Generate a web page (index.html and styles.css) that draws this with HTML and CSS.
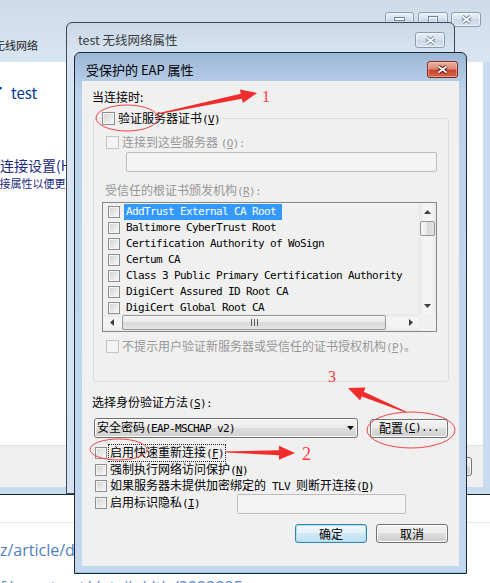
FILE: index.html
```html
<!DOCTYPE html>
<html lang="zh-CN">
<head>
<meta charset="utf-8">
<title>受保护的 EAP 属性</title>
<link rel="stylesheet" href="styles.css">
</head>
<body>

<div class="page">
  <div class="page-rule"></div>
  <div class="page-link">z/article/details/b9f5e3ad</div>
  <div class="page-link second">f.bewnt.net/details/dtls/2222225</div>
</div>

<!-- back window: wizard -->
<div class="win win-wizard">
  <div class="glass">
    <div class="glass-title">手动连接到无线网络</div>
    <div class="caption-btns">
      <span class="cap-btn cap-min"><svg width="11" height="5" viewBox="0 0 11 5"><rect x="0.5" y="0.5" width="10" height="3" fill="#fff" stroke="#6f8198"/></svg></span>
      <span class="cap-btn cap-max"><svg width="10" height="8" viewBox="0 0 10 8"><rect x="1" y="1" width="8" height="6" fill="none" stroke="#6f8198" stroke-width="2"/><rect x="1.5" y="1.5" width="7" height="5" fill="none" stroke="#fff" stroke-width="1"/></svg></span>
      <span class="cap-btn cap-close"><svg width="15" height="11" viewBox="0 0 15 11"><path d="M3.5 2.5 L11.5 8.5 M11.5 2.5 L3.5 8.5" stroke="#6f8198" stroke-width="3.6"/><path d="M3.5 2.5 L11.5 8.5 M11.5 2.5 L3.5 8.5" stroke="#fff" stroke-width="1.8"/></svg></span>
    </div>
  </div>
  <div class="wiz-client">
    <div class="wiz-body">
      <div class="wiz-main">成功地添加了 test</div>
      <div class="wiz-link">更改连接设置(H)</div>
      <div class="wiz-desc">打开连接属性以便更改设置。</div>
    </div>
    <div class="wiz-foot"><span class="btn wiz-btn">关闭</span></div>
  </div>
</div>

<!-- middle window -->
<div class="win win-props">
  <div class="tb tb-inactive">
    <span class="tb-title">test 无线网络属性</span>
    <span class="cap-btn cap-close"><svg width="15" height="11" viewBox="0 0 15 11"><path d="M3.5 2.5 L11.5 8.5 M11.5 2.5 L3.5 8.5" stroke="#6f8198" stroke-width="3.6"/><path d="M3.5 2.5 L11.5 8.5 M11.5 2.5 L3.5 8.5" stroke="#fff" stroke-width="1.8"/></svg></span>
  </div>
  <div class="props-client"></div>
</div>

<!-- front window: EAP -->
<div class="win win-eap">
  <div class="tb tb-active">
    <span class="tb-title">受保护的 EAP 属性</span>
    <span class="cap-btn cap-close red"><svg width="15" height="11" viewBox="0 0 15 11"><path d="M3.5 2.5 L11.5 8.5 M11.5 2.5 L3.5 8.5" stroke="#4a150c" stroke-width="3.8"/><path d="M3.5 2.5 L11.5 8.5 M11.5 2.5 L3.5 8.5" stroke="#fff" stroke-width="1.9"/></svg></span>
  </div>
  <div class="eap-client">
    <div class="lbl when">当连接时:</div>

    <div class="group">
      <div class="legend"><span class="cb"></span><span class="legend-text">验证服务器证书<span class="m">(<u>V</u>)</span></span></div>
      <div class="row dis r-servers"><span class="cb dis"></span><span class="rtxt">连接到这些服务器 <span class="m">(<u>O</u>):</span></span></div>
      <div class="tbx servers"></div>
      <div class="lbl dis r-ca">受信任的根证书颁发机构<span class="m">(<u>R</u>):</span></div>
      <div class="listbox">
        <div class="items">
          <div class="item"><span class="cb sm"></span><span class="txt sel">AddTrust External CA Root</span></div>
          <div class="item"><span class="cb sm"></span><span class="txt">Baltimore CyberTrust Root</span></div>
          <div class="item"><span class="cb sm"></span><span class="txt">Certification Authority of WoSign</span></div>
          <div class="item"><span class="cb sm"></span><span class="txt">Certum CA</span></div>
          <div class="item"><span class="cb sm"></span><span class="txt">Class 3 Public Primary Certification Authority</span></div>
          <div class="item"><span class="cb sm"></span><span class="txt">DigiCert Assured ID Root CA</span></div>
          <div class="item"><span class="cb sm"></span><span class="txt">DigiCert Global Root CA</span></div>
        </div>
        <div class="vscroll">
          <span class="sarrow"><svg width="7" height="4" viewBox="0 0 7 4"><path d="M0 4 L3.5 0 L7 4Z" fill="#3f3f3f"/></svg></span>
          <span class="vthumb"></span>
          <span class="sfill"></span>
          <span class="sarrow"><svg width="7" height="4" viewBox="0 0 7 4"><path d="M0 0 L3.5 4 L7 0Z" fill="#3f3f3f"/></svg></span>
        </div>
        <div class="hscroll">
          <span class="sarrow"><svg width="4" height="7" viewBox="0 0 4 7"><path d="M4 0 L0 3.5 L4 7Z" fill="#3f3f3f"/></svg></span>
          <span class="hthumb"><span class="grip"></span></span>
          <span class="sfill"></span>
          <span class="sarrow"><svg width="4" height="7" viewBox="0 0 4 7"><path d="M0 0 L4 3.5 L0 7Z" fill="#3f3f3f"/></svg></span>
        </div>
        <div class="scorner"></div>
      </div>
      <div class="row dis r-noprompt"><span class="cb dis"></span><span class="rtxt">不提示用户验证新服务器或受信任的证书授权机构<span class="m">(<u>P</u>)</span>。</span></div>
    </div>

    <div class="lbl method">选择身份验证方法<span class="m">(<u>S</u>):</span></div>
    <div class="method-row">
      <div class="combo"><span class="combo-text">安全密码<span class="m">(EAP-MSCHAP v2)</span></span><svg width="7" height="4" viewBox="0 0 7 4"><path d="M0 0 L3.5 4 L7 0Z" fill="#111"/></svg></div>
      <span class="btn cfg">配置<span class="m">(<u>C</u>)...</span></span>
    </div>

    <div class="opts">
      <div class="row opt"><span class="cb sm"></span><span class="rtxt focus">启用快速重新连接<span class="m">(<u>F</u>)</span></span></div>
      <div class="row opt"><span class="cb sm"></span><span class="rtxt">强制执行网络访问保护<span class="m">(<u>N</u>)</span></span></div>
      <div class="row opt"><span class="cb sm"></span><span class="rtxt">如果服务器未提供加密绑定的<span class="m"> TLV </span>则断开连接<span class="m">(<u>D</u>)</span></span></div>
      <div class="row opt"><span class="cb sm"></span><span class="rtxt ident-lbl">启用标识隐私<span class="m">(<u>I</u>)</span></span><span class="tbx ident"></span></div>
    </div>

    <div class="dlg-btns">
      <span class="btn def">确定</span>
      <span class="btn">取消</span>
    </div>
  </div>
</div>

<!-- red annotations -->
<svg class="marks" width="490" height="583" viewBox="0 0 490 583">
  <g fill="none" stroke="#ee4444" stroke-width="1">
    <ellipse cx="127" cy="118" rx="31" ry="13"/>
    <ellipse cx="118.5" cy="449.5" rx="28.5" ry="10.5"/>
    <ellipse cx="411" cy="430" rx="44" ry="18"/>
  </g>
  <g fill="#f22b2b">
    <polygon points="156.9,113.5 240.8,93.8 239.9,89.4 257,93 242.8,103.1 241.9,98.7 157.1,114.5"/>
    <polygon points="405.6,412.5 361.8,396.4 360.1,400.6 348,388 365.5,387.6 363.8,391.8 406,411.5"/>
    <polygon points="225,451.5 279,450.3 279,445.8 295,453 279,459.8 279,455.3 225,452.5"/>
  </g>
  <g class="mark-num" fill="#ff3b3b">
    <text x="262" y="102" font-size="16">1</text>
    <text x="328" y="382" font-size="16">3</text>
    <text x="302" y="460" font-size="18">2</text>
  </g>
</svg>

</body>
</html>
```

FILE: styles.css
```css
* { box-sizing: border-box; }
html, body { margin: 0; padding: 0; }
body {
  position: relative;
  width: 490px;
  height: 583px;
  overflow: hidden;
  background: #fff;
  font-family: "Noto Sans CJK SC", "Noto Sans", sans-serif;
  font-size: 12px;
  color: #000;
}
u { text-decoration: underline; text-underline-offset: 1px; }
.m {
  font-family: "DejaVu Sans Mono", "Liberation Mono", monospace;
  font-size: 11px;
  letter-spacing: -0.62px;
  white-space: pre;
}

/* ---------- background page ---------- */
.page { padding-top: 522px; }
.page-rule { border-top: 1px solid #e8e8e8; }
.page-link {
  margin-top: 16px;
  font-family: "Open Sans", sans-serif;
  font-size: 16px;
  line-height: 22px;
  color: #4f7fc1;
  white-space: nowrap;
}
.page-link.second { margin-top: 15px; color: #5a87c6; }

/* ---------- windows ---------- */
.win { position: absolute; }

.win-wizard {
  left: -10px;
  top: 0;
  width: 501px;
  height: 495px;
  border: 1px solid #1d2733;
  border-top: 0;
  background: linear-gradient(#cddbea, #d9e5f1 62px, #c8dbef 63px, #c8dbef);
  display: flex;
  flex-direction: column;
}
.glass {
  flex: none;
  height: 62px;
  display: flex;
  justify-content: space-between;
  align-items: flex-start;
}
.glass-title {
  align-self: flex-end;
  margin: 0 0 9px -52px;
  font-size: 11px;
  line-height: 16px;
  color: #1b1b1b;
  white-space: nowrap;
}
.caption-btns { display: flex; margin: 12px 9px 0 0; }
.cap-btn {
  display: flex;
  align-items: center;
  justify-content: center;
  height: 15px;
  border: 1px solid #8a9cb1;
  border-radius: 3px;
  background: linear-gradient(#e9eff7, #d6e1ed 50%, #cbd8e7 50%, #d6e2ef);
  box-shadow: inset 0 0 0 1px rgba(255,255,255,0.55);
}
.cap-min { width: 29px; }
.cap-max { width: 30px; margin-left: 4px; }
.caption-btns .cap-close { width: 30px; margin-left: 3px; }

.wiz-client {
  flex: 1;
  margin: 0 7px 7px;
  background: #fff;
  display: flex;
  flex-direction: column;
}
.wiz-body { flex: 1; white-space: nowrap; }
.wiz-main {
  margin-top: 21px;
  font-size: 15px;
  line-height: 20px;
  color: #003399;
  text-indent: -84.4px;
  word-spacing: 4px;
}
.wiz-link {
  margin-top: 53px;
  font-size: 14px;
  line-height: 18px;
  color: #1a2a80;
  text-indent: -26px;
}
.wiz-desc {
  margin-top: 2px;
  font-size: 11px;
  line-height: 14px;
  color: #1a2a80;
  text-indent: -31.6px;
}
.wiz-foot {
  flex: none;
  height: 42px;
  border-top: 1px solid #dfdfdf;
  background: #f0f0f0;
  display: flex;
  justify-content: flex-end;
  align-items: flex-start;
  padding: 11px 11px 0 0;
}
.wiz-btn { width: 73px; height: 20px; }

/* middle window */
.win-props {
  left: 66px;
  top: 22px;
  width: 389px;
  height: 472px;
  border: 1px solid #3b4857;
  border-radius: 6px 6px 0 0;
  background: linear-gradient(#c9d7e7, #d8e4f1 30px, #d5e2f0);
}
.tb { display: flex; align-items: flex-start; }
.tb-inactive { height: 29px; padding: 0 9px 0 11px; }
.tb-title { margin-top: 9px; line-height: 16px; white-space: nowrap; }
.tb-inactive .tb-title { font-size: 12.5px; color: #3d3d3d; }
.tb-inactive .cap-close { margin-left: auto; margin-top: 9px; width: 30px; height: 16px; }
.props-client { margin: 0 7px; height: 430px; background: #f0f0f0; }

/* front window */
.win-eap {
  left: 74px;
  top: 52px;
  width: 393px;
  height: 522px;
  border: 1px solid #1e2833;
  border-radius: 6px 6px 0 0;
  background: linear-gradient(#9cb7d6, #b4cbe6 28px, #bdd3eb 40px, #c3d8ee);
  box-shadow: inset 0 -1px 0 #86c8ee;
}
.tb-active { height: 28px; padding: 0 8px 0 11px; }
.tb-active .tb-title { font-size: 13px; color: #000; }
.cap-close.red {
  margin-left: auto;
  margin-top: 8px;
  width: 31px;
  height: 17px;
  border-color: #7e2a1c;
  background: linear-gradient(#ecae9f, #dc8a74 45%, #c9452c 55%, #d4664b);
  box-shadow: inset 0 0 0 1px rgba(255,220,210,0.45);
}

.eap-client {
  margin: 0 7px;
  height: 485px;
  background: #f0f0f0;
  line-height: 14px;
}
.lbl { white-space: nowrap; }
.dis, .lbl.dis { color: #979797; }
.when { padding: 8px 0 0 10px; line-height: 16px; }

.group {
  margin: 13px 10px 0 11px;
  height: 264px;
  border: 1px solid #d5dfe5;
  border-radius: 3px;
}
.legend {
  display: flex;
  align-items: center;
  width: fit-content;
  height: 13px;
  margin: -7px 0 0 8px;
  padding-right: 2px;
  background: #f0f0f0;
}
.legend-text { margin-left: 3px; white-space: nowrap; }

.row { display: flex; align-items: center; white-space: nowrap; }
.rtxt { margin-left: 3px; }
.r-servers { height: 13px; margin-top: 11px; padding-left: 12px; }
.tbx {
  display: block;
  border: 1px solid #bdbdbd;
  border-radius: 2px;
  background: #f4f4f4;
}
.servers { margin: 3px 0 0 32px; width: 311px; height: 20px; }
.r-ca { margin-top: 11px; padding-left: 11px; }
.r-noprompt { height: 13px; margin-top: 8px; padding-left: 12px; }

/* checkboxes */
.cb {
  flex: none;
  display: inline-block;
  width: 13px;
  height: 13px;
  border: 1px solid #8e8f8f;
  background: linear-gradient(135deg, #d2d2d2, #f9f9f9);
  box-shadow: inset 0 0 0 1px #f3f3f3;
}
.cb.sm { width: 12px; height: 12px; }
.cb.dis { border-color: #c4c4c4; background: #f4f4f4; box-shadow: none; }

/* list */
.listbox {
  margin: 3px 0 0 8px;
  width: 335px;
  height: 130px;
  border: 1px solid #828790;
  display: grid;
  grid-template-columns: 1fr 17px;
  grid-template-rows: 1fr 17px;
  background: #f0f0f0;
}
.items { overflow: hidden; padding-top: 1px; }
.item { display: flex; align-items: center; height: 16px; }
.item .cb { margin-left: 5px; }
.item .txt {
  margin-left: 4px;
  padding: 0 6px 0 2px;
  height: 16px;
  line-height: 16px;
  font-family: "DejaVu Sans Mono", "Liberation Mono", monospace;
  font-size: 11px;
  letter-spacing: -0.62px;
  white-space: pre;
}
.item .txt.sel { background: #3399ff; color: #fff; }

.vscroll {
  display: flex;
  flex-direction: column;
  background: linear-gradient(90deg, #e6e6e6, #f4f4f4 25%, #f4f4f4 75%, #e6e6e6);
}
.hscroll {
  display: flex;
  background: linear-gradient(#e6e6e6, #f4f4f4 25%, #f4f4f4 75%, #e6e6e6);
}
.sarrow { flex: none; width: 17px; height: 17px; display: flex; align-items: center; justify-content: center; }
.sfill { flex: 1; }
.vthumb {
  flex: none;
  height: 15px;
  margin: 1px 1px 0;
  border: 1px solid #979797;
  border-radius: 2px;
  background: linear-gradient(90deg, #f5f5f5, #eaeaea 50%, #d9d9d9 50%, #e2e2e2);
}
.hthumb {
  flex: none;
  width: 264px;
  height: 15px;
  margin: 1px 0 0 2px;
  border: 1px solid #979797;
  border-radius: 2px;
  background: linear-gradient(#f5f5f5, #eaeaea 50%, #d9d9d9 50%, #e2e2e2);
  display: flex;
  align-items: center;
  justify-content: center;
}
.grip {
  width: 7px;
  height: 7px;
  background: linear-gradient(90deg, #5a5a5a 0 1px, transparent 1px 3px, #5a5a5a 3px 4px, transparent 4px 6px, #5a5a5a 6px 7px);
}
.scorner { background: #f0f0f0; }

/* method */
.method { margin-top: 13px; padding-left: 10px; }
.method-row { display: flex; align-items: center; margin-top: 7px; padding-left: 12px; }
.combo {
  width: 264px;
  height: 20px;
  border: 1px solid #707070;
  border-radius: 3px;
  background: linear-gradient(#f2f2f2, #ebebeb 50%, #dddddd 50%, #cfcfcf);
  box-shadow: inset 0 0 0 1px #fbfbfb;
  display: flex;
  align-items: center;
  justify-content: space-between;
  padding: 0 3px 0 2px;
  white-space: nowrap;
}
.btn {
  display: flex;
  align-items: center;
  justify-content: center;
  height: 19px;
  border: 1px solid #707070;
  border-radius: 3px;
  background: linear-gradient(#f2f2f2, #ebebeb 50%, #dddddd 50%, #cfcfcf);
  box-shadow: inset 0 0 0 1px #fcfcfc;
  white-space: nowrap;
  line-height: 14px;
}
.cfg { width: 78px; margin-left: 12px; }

.opts { margin-top: 7px; padding-left: 13px; }
.opt { height: 16.5px; }
.focus { outline: 1px dotted #222; outline-offset: 0; padding: 0 1px; margin-left: 2px; }
.ident-lbl { width: 127px; }
.ident { align-self: flex-start; margin-top: -0.5px; width: 169px; height: 20px; flex: none; }

.dlg-btns { display: flex; justify-content: flex-end; gap: 9px; margin-top: 13px; padding-right: 11px; }
.dlg-btns .btn { width: 72px; }
.btn.def {
  border-color: #3c7fb1;
  background: linear-gradient(#f1f8fc, #e4f1f9 50%, #d2e8f6 50%, #c2e0f3);
  box-shadow: inset 0 0 0 1px #a6e2f8;
}

/* annotations */
.marks { position: absolute; left: 0; top: 0; pointer-events: none; }
.mark-num { font-family: "Liberation Serif", serif; }
```
